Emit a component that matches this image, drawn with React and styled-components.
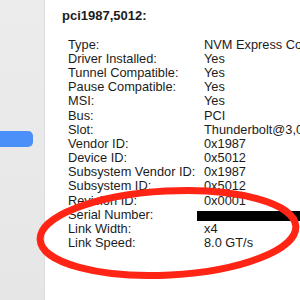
import React from "react";
import styled, { createGlobalStyle } from "styled-components";

const Global = createGlobalStyle`
  html, body { margin: 0; padding: 0; background: #ffffff; }
  body { font-family: "Liberation Sans", Arial, sans-serif; }
`;

const Window = styled.div`
  position: relative;
  width: 300px;
  height: 300px;
  display: flex;
  overflow: hidden;
  background: #ffffff;
`;

const Sidebar = styled.div`
  flex: 0 0 44px;
  background: linear-gradient(#ececec, #e6e6e6);
  border-right: 1px solid #dedede;
  padding-top: 131px;
  box-sizing: content-box;
`;

const SelectedItem = styled.div`
  margin-left: -10px;
  width: 43px;
  height: 16px;
  border-radius: 5px;
  background: #4b8ff8;
`;

const Main = styled.div`
  flex: 1;
  padding: 8px 0 0 17px;
  min-width: 0;
  color: #1c1c1c;
`;

const Title = styled.div`
  font-size: 13px;
  font-weight: 700;
  line-height: 16px;
  white-space: nowrap;
`;

const Table = styled.div`
  margin-top: 13.6px;
  padding-left: 6px;
  display: grid;
  grid-template-columns: 136px max-content;
  grid-auto-rows: 14.2px;
  font-size: 12.8px;
  line-height: 14.2px;
  white-space: nowrap;
`;

const Label = styled.div``;
const Value = styled.div``;

const Redaction = styled.div`
  margin: 3px 0 0 -7px;
  width: 120px;
  height: 10px;
  background: #000;
`;

const Annotation = styled.svg`
  position: absolute;
  left: 0;
  top: 0;
  pointer-events: none;
`;

const rows = [
  ["Type:", "NVM Express Controller"],
  ["Driver Installed:", "Yes"],
  ["Tunnel Compatible:", "Yes"],
  ["Pause Compatible:", "Yes"],
  ["MSI:", "Yes"],
  ["Bus:", "PCI"],
  ["Slot:", "Thunderbolt@3,0,0"],
  ["Vendor ID:", "0x1987"],
  ["Device ID:", "0x5012"],
  ["Subsystem Vendor ID:", "0x1987"],
  ["Subsystem ID:", "0x5012"],
  ["Revision ID:", "0x0001"],
  ["Serial Number:", null],
  ["Link Width:", "x4"],
  ["Link Speed:", "8.0 GT/s"],
];

export default function App() {
  return (
    <>
      <Global />
      <Window>
        <Sidebar>
          <SelectedItem />
        </Sidebar>
        <Main>
          <Title>pci1987,5012:</Title>
          <Table>
            {rows.map(([l, v]) => (
              <React.Fragment key={l}>
                <Label>{l}</Label>
                <Value>{v === null ? <Redaction /> : v}</Value>
              </React.Fragment>
            ))}
          </Table>
        </Main>
        <Annotation width="300" height="300" viewBox="0 0 300 300">
          <ellipse
            cx="168"
            cy="233"
            rx="128"
            ry="42"
            fill="none"
            stroke="#ff2414"
            strokeWidth="7"
            transform="rotate(-3 168 233)"
          />
        </Annotation>
      </Window>
    </>
  );
}
